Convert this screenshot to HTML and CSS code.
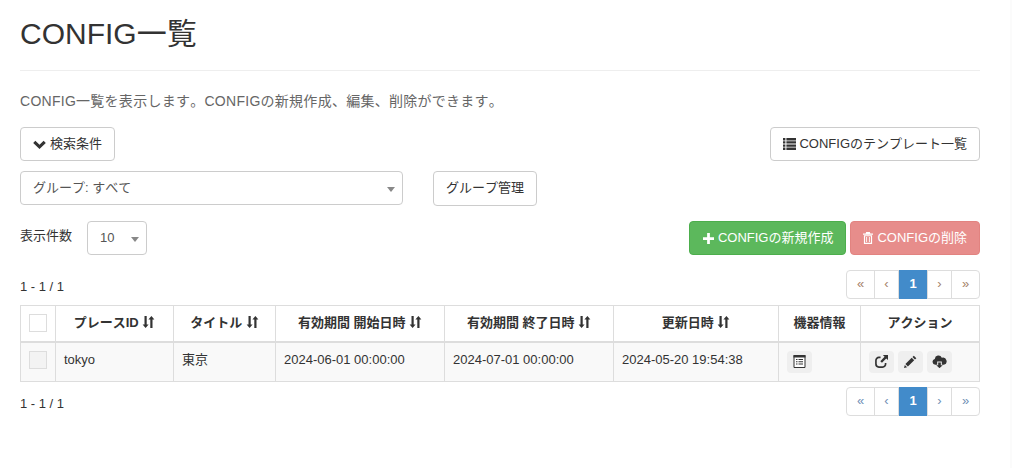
FILE: index.html
```html
<!DOCTYPE html>
<html lang="ja">
<head>
<meta charset="utf-8">
<title>CONFIG一覧</title>
<link rel="stylesheet" href="styles.css">
</head>
<body>
<main class="page">
  <h1 class="title">CONFIG一覧</h1>
  <p class="lead">CONFIG一覧を表示します。CONFIGの新規作成、編集、削除ができます。</p>

  <div class="row row-search">
    <button class="btn"><svg class="ic ic-chev" viewBox="0 0 14 10"><path d="M0 3.200 2.400.8 7 5.400 11.600.8 14 3.200 7 10z" fill="#333"/></svg>検索条件</button>
    <button class="btn btn-template"><svg class="ic ic-list" viewBox="0 0 13 12"><path d="M0 0h2.400v2.400H0zM3.400 0H13v2.400H3.400zM0 3.200h2.400v2.400H0zM3.400 3.200H13v2.400H3.400zM0 6.400h2.400v2.400H0zM3.400 6.400H13v2.400H3.400zM0 9.600h2.400V12H0zM3.400 9.600H13V12H3.400z" fill="#333"/></svg>CONFIGのテンプレート一覧</button>
  </div>

  <div class="row row-group">
    <div class="select select-group">グループ: すべて<span class="caret"></span></div>
    <button class="btn btn-group">グループ管理</button>
  </div>

  <div class="row row-actions">
    <div class="size">
      <span class="size-label">表示件数</span>
      <div class="select select-size">10<span class="caret"></span></div>
    </div>
    <div class="actions">
      <button class="btn btn-success"><svg class="ic ic-plus" viewBox="0 0 12 12"><path d="M4.500 0h3v4.500h4.500v3H7.500V12h-3V7.500H0v-3h4.500z" fill="#fff"/></svg>CONFIGの新規作成</button>
      <button class="btn btn-danger"><svg class="ic ic-trash" viewBox="0 0 11 13"><path d="M3.500 0h4l.6 1.500H11v1.300H0V1.500h2.900zM1 3.500h9V13H1zm1.300 1.200v7h6.400v-7z" fill="#fff"/><path d="M3.500 5.500h1v5.500h-1zM6.500 5.500h1v5.500h-1z" fill="#fff"/></svg>CONFIGの削除</button>
    </div>
  </div>

  <div class="row row-count">
    <span class="count">1 - 1 / 1</span>
    <nav class="pager pager-off">
      <a>«</a><a>‹</a><a class="on">1</a><a class="next">›</a><a>»</a>
    </nav>
  </div>

  <table class="grid">
    <colgroup>
      <col class="c1"><col class="c2"><col class="c3"><col class="c4"><col class="c5"><col class="c6"><col class="c7"><col class="c8">
    </colgroup>
    <thead>
      <tr>
        <th><span class="check"></span></th>
        <th>プレースID <svg class="sort" viewBox="0 0 13 12"><path d="M2.500 0h2.200v8.500h1.900L3.600 12 .6 8.500h1.900zM8.300 12h2.200V3.500h1.900L9.400 0l-3 3.500h1.900z" fill="#333"/></svg></th>
        <th>タイトル <svg class="sort" viewBox="0 0 13 12"><path d="M2.500 0h2.200v8.500h1.900L3.600 12 .6 8.500h1.900zM8.300 12h2.200V3.500h1.900L9.400 0l-3 3.500h1.900z" fill="#333"/></svg></th>
        <th>有効期間 開始日時 <svg class="sort" viewBox="0 0 13 12"><path d="M2.500 0h2.200v8.500h1.900L3.600 12 .6 8.500h1.900zM8.300 12h2.200V3.500h1.900L9.400 0l-3 3.500h1.900z" fill="#333"/></svg></th>
        <th>有効期間 終了日時 <svg class="sort" viewBox="0 0 13 12"><path d="M2.500 0h2.200v8.500h1.900L3.600 12 .6 8.500h1.900zM8.300 12h2.200V3.500h1.900L9.400 0l-3 3.500h1.900z" fill="#333"/></svg></th>
        <th>更新日時 <svg class="sort" viewBox="0 0 13 12"><path d="M2.500 0h2.200v8.500h1.900L3.600 12 .6 8.500h1.900zM8.300 12h2.200V3.500h1.900L9.400 0l-3 3.500h1.900z" fill="#333"/></svg></th>
        <th>機器情報</th>
        <th>アクション</th>
      </tr>
    </thead>
    <tbody>
      <tr>
        <td><span class="check check-off"></span></td>
        <td>tokyo</td>
        <td>東京</td>
        <td>2024-06-01 00:00:00</td>
        <td>2024-07-01 00:00:00</td>
        <td>2024-05-20 19:54:38</td>
        <td>
          <span class="tool"><svg class="ti" viewBox="0 0 12 13"><path d="M.5.5h11v12H.5z" fill="#fff" stroke="#333"/><path d="M0 0h12v2.500H0zM2.500 4h1.500v1H2.500zM5 4h4.500v1H5zM2.500 6.200h1.500v1H2.500zM5 6.200h4.500v1H5zM2.500 8.400h1.500v1H2.500zM5 8.400h4.500v1H5z" fill="#333"/></svg></span>
        </td>
        <td>
          <div class="tools">
            <span class="tool"><svg class="ti" viewBox="0 0 14 14"><path d="M6 2.600H4.200A3.200 3.200 0 0 0 1 5.800v4A3.200 3.200 0 0 0 4.200 13h4a3.200 3.200 0 0 0 3.200-3.200V8.500" fill="none" stroke="#333" stroke-width="1.800"/><path d="M8.500 0H14v5.500l-1.900-1.700L7.500 8.400 5.700 6.600l4.600-4.700z" fill="#333"/></svg></span>
            <span class="tool"><svg class="ti" viewBox="0 0 14 14"><path d="M10.600.7l2.700 2.700-1.500 1.500-2.700-2.700zM8.300 3 11 5.700 4.200 12.500 1.500 9.800zM.9 10.700l2.400 2.400-3.300.9z" fill="#333"/></svg></span>
            <span class="tool"><svg class="ti ti-cloud" viewBox="0 0 16 14"><path d="M3.500 10.500a3.200 3.200 0 0 1-.6-6.300 4 4 0 0 1 7.600-1.300A3.700 3.700 0 0 1 12.800 10.500H10.500V7h-5v3.500z" fill="#333"/><path d="M6.600 8h2.800v3H11.500L8 14.200 4.500 11h2.100z" fill="#333"/></svg></span>
          </div>
        </td>
      </tr>
    </tbody>
  </table>

  <div class="row row-count row-bottom">
    <span class="count">1 - 1 / 1</span>
    <nav class="pager">
      <a>«</a><a>‹</a><a class="on">1</a><a class="next">›</a><a>»</a>
    </nav>
  </div>
</main>
</body>
</html>
```

FILE: styles.css
```css
* { box-sizing: border-box; }
html, body { margin: 0; background: #fff; }
body {
  font-family: "Liberation Sans", "Noto Sans CJK JP", sans-serif;
  font-size: 13px;
  line-height: 1.42857;
  color: #333;
  font-kerning: none;
  text-spacing-trim: space-all;
  overflow: hidden;
}
.page { width: 1012px; height: 468px; padding: 0 30px 0 20px; border-right: 2px solid #fbfbfb; }
.title {
  margin: 0;
  height: 71px;
  padding-top: 14px;
  font-size: 30px;
  font-weight: 400;
  line-height: 40px;
  border-bottom: 1px solid #eee;
}
.lead { margin: 0; padding-top: 20px; height: 56px; font-size: 14px; line-height: 20px; letter-spacing: .27px; color: #666; }
.row { display: flex; justify-content: space-between; align-items: flex-start; }
.btn {
  display: inline-flex;
  align-items: center;
  height: 34px;
  padding: 0 12px;
  font: inherit;
  color: #333;
  background: #fff;
  border: 1px solid #ccc;
  border-radius: 4px;
}
.ic { flex: none; margin-right: 4px; }
.ic-chev { width: 13px; height: 9px; }
.ic-list { width: 13px; height: 12px; margin-right: 3px; }
.ic-plus { width: 11px; height: 11px; }
.ic-trash { width: 10px; height: 12px; }
.row-search { height: 44px; }
.row-group { height: 50px; justify-content: flex-start; gap: 30px; }
.select {
  position: relative;
  display: flex;
  align-items: center;
  height: 34px;
  padding-left: 12px;
  background: #fff;
  border: 1px solid #ccc;
  border-radius: 4px;
  color: #555;
}
.select-group { width: 383px; }
.caret {
  position: absolute;
  top: 15px;
  right: 7px;
  border-top: 5px solid #888;
  border-left: 4px solid transparent;
  border-right: 4px solid transparent;
}
.btn-group { height: 35px; }
.row-actions { height: 49px; }
.size { display: flex; gap: 15px; }
.size-label { padding-top: 6px; }
.select-size { width: 60px; }
.actions { display: flex; gap: 4px; }
.btn-success { padding-left: 13px; color: #fff; background: #5cb85c; border-color: #4cae4c; }
.btn-danger { color: #fff; background: #e78d8b; border-color: #e28380; }
.row-count { height: 35px; }
.count { padding-top: 8px; }
.pager { display: flex; height: 29px; }
.pager a {
  display: flex;
  align-items: center;
  justify-content: center;
  width: 25px;
  margin-left: -1px;
  color: #6f8fb5;
  background: #fff;
  border: 1px solid #ddd;
}
.pager a:first-child { width: 29px; margin-left: 0; border-radius: 4px 0 0 4px; }
.pager a:last-child { width: 29px; border-radius: 0 4px 4px 0; }
.pager a.on { width: 28px; margin-left: 0; color: #fff; font-weight: 700; background: #428bca; border-color: #428bca; }
.pager a.next { margin-left: 0; }
.pager-off a { color: #a5826a; }
.grid {
  width: 959px;
  table-layout: fixed;
  border-collapse: collapse;
}
.c1 { width: 35px; } .c2 { width: 118px; } .c3 { width: 102px; } .c4 { width: 169px; }
.c5 { width: 169px; } .c6 { width: 165px; } .c7 { width: 82px; } .c8 { width: 119px; }
.grid th, .grid td { border: 1px solid #ddd; white-space: nowrap; }
.grid th {
  height: 36px;
  padding: 0;
  text-align: center;
  font-weight: 700;
  border-bottom-width: 2px;
}
.grid td { height: 39px; padding: 8px; vertical-align: top; background: #f9f9f9; }
.check { display: block; width: 18px; height: 18px; margin: 0 auto; background: #fff; border: 1px solid #ddd; }
.check-off { background: #f3f3f3; }
.sort { width: 13px; height: 12px; vertical-align: -1px; }
.tools { display: flex; gap: 4px; }
.tool {
  display: inline-flex;
  align-items: center;
  justify-content: center;
  width: 25px;
  height: 22px;
  background: #efefef;
  border-radius: 4px;
  vertical-align: top;
}
.ti { width: 13px; height: 13px; }
.ti-cloud { width: 15px; }
.row-bottom { margin-top: 5px; height: 43px; }
```
